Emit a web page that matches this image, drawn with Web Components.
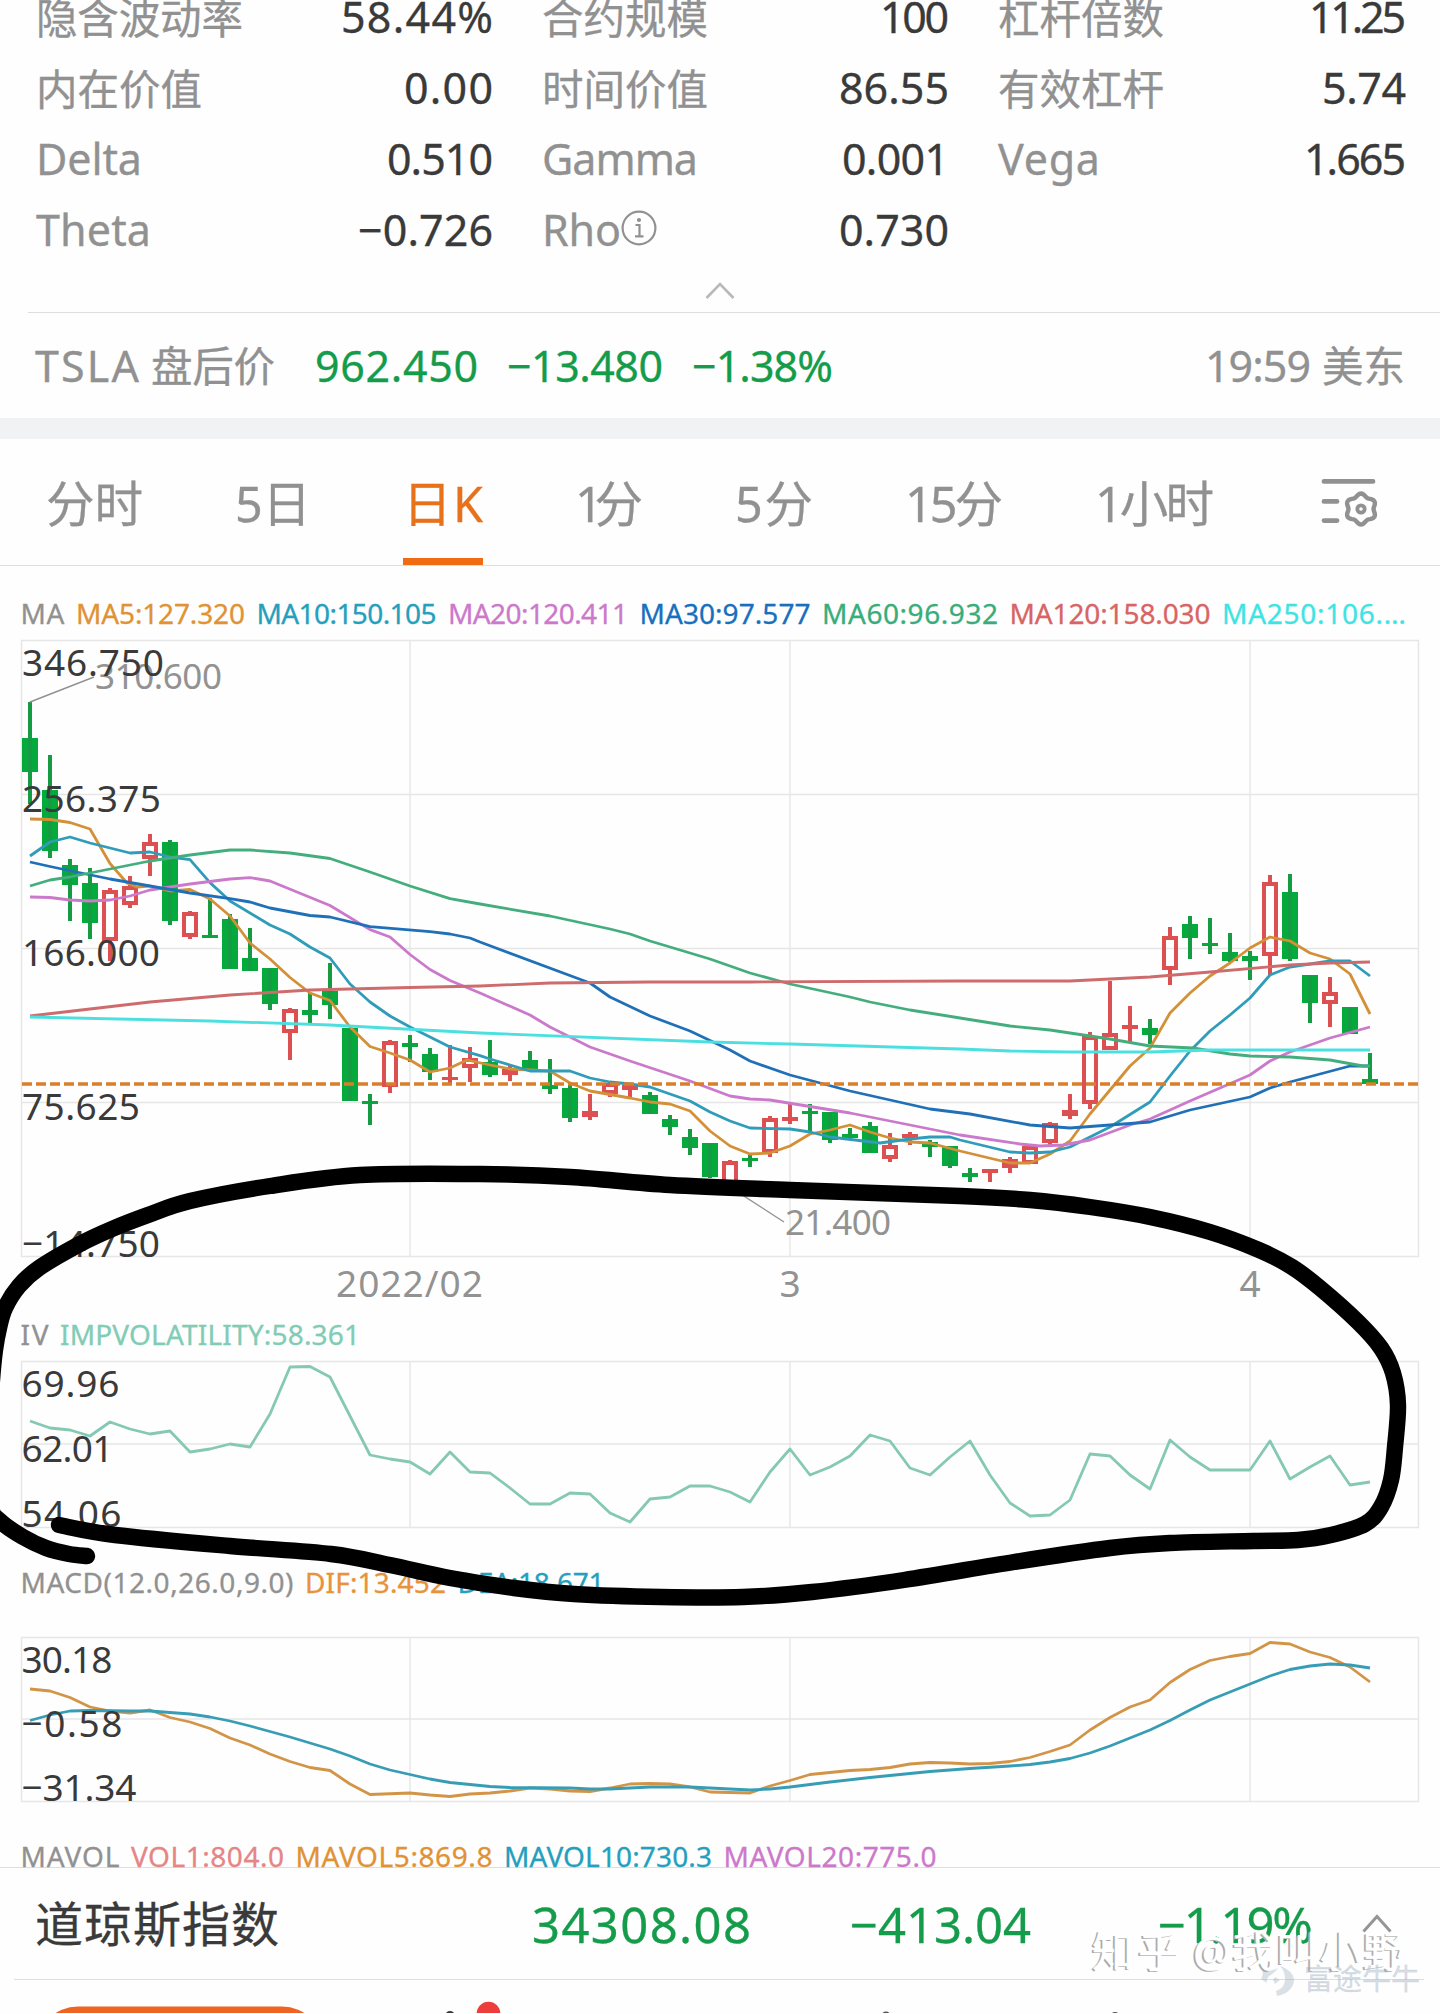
<!DOCTYPE html>
<html lang="zh-CN">
<head>
<meta charset="utf-8">
<title>TSLA</title>
<style>
  body {
    margin: 0;
    width: 1440px;
    height: 2014px;
    overflow: hidden;
    position: relative;
    background: #fefefe;
    color: #3a3a3a;
    font-family: "Noto Sans", "Noto Sans CJK SC", sans-serif;
  }
</style>
</head>
<body>
<option-stats></option-stats>
<after-hours></after-hours>
<period-tabs></period-tabs>

<chart-legend style="height:74px;padding-top:11px" items='[["MA",44,"#919191"],["MA5:127.320",169,"#e09235"],["MA10:150.105",180,"#249fbd"],["MA20:120.411",180,"#cc78cb"],["MA30:97.577",171,"#1670bd"],["MA60:96.932",176,"#38ad7b"],["MA120:158.030",201,"#d86464"],["MA250:106.…",184,"#3ee4e4"]]'></chart-legend>
<price-chart></price-chart>
<chart-legend style="height:104px;padding-top:45px" items='[["IV",28,"#919191"],["IMPVOLATILITY:58.361",300,"#81ccb5"]]'></chart-legend>
<line-chart id="iv" height="166" labels='[["69.96",35.5,98],["62.01",100.5,92],["54.06",165.5,100]]'></line-chart>
<chart-legend style="height:110px;padding-top:23px" items='[["MACD(12.0,26.0,9.0)",273,"#919191"],["DIF:13.452",141,"#e8923a"],["DEA:18.671",147,"#249fbd"]]'></chart-legend>
<line-chart id="macd" height="164" labels='[["30.18",35,91],["−0.58",99,101],["−31.34",163,115]]'></line-chart>
<chart-legend style="height:66px;padding-top:23px" items='[["MAVOL",99,"#919191"],["VOL1:804.0",153,"#e58585"],["MAVOL5:869.8",197,"#e09235"],["MAVOL10:730.3",208,"#249fbd"],["MAVOL20:775.0",213,"#cc78cb"]]'></chart-legend>
<index-bar></index-bar>
<action-bar></action-bar>
<pen-stroke></pen-stroke>
<water-mark></water-mark>

<script>
const GREY = '#919191';
const GREEN = '#149c4b';

// text squeezed or tracked out to an exact width
class FitText extends HTMLElement {
  constructor() {
    super();
    this.attachShadow({ mode: 'open' });
    this.shadowRoot.innerHTML = `
    <style>
      :host { display: inline-block; white-space: nowrap; }
      span { display: inline-block; -webkit-text-stroke: .3px currentColor; }
    </style>
    <span><slot></slot></span>`;
  }

  connectedCallback() {
    const span = this.shadowRoot.querySelector('span');
    const want = Number(this.getAttribute('width'));
    const count = [...this.textContent].length;
    const gap = (want - span.getBoundingClientRect().width) / (count - 1);
    this.style.width = want + 'px';
    span.style.letterSpacing = gap + 'px';
  }
}
customElements.define('fit-text', FitText);

class OptionStats extends HTMLElement {
  constructor() {
    super();
    this.attachShadow({ mode: 'open' });
    const cells = [
      ['隐含波动率', 207, '58.44%', 152], ['合约规模', 166, '100', 69], ['杠杆倍数', 166, '11.25', 97],
      ['内在价值', 166, '0.00', 89], ['时间价值', 166, '86.55', 110], ['有效杠杆', 166, '5.74', 84],
      ['Delta', 106, '0.510', 106], ['Gamma', 156, '0.001', 107], ['Vega', 102, '1.665', 102],
      ['Theta', 115, '−0.726', 135], ['Rho', 79, '0.730', 110],
    ];
    const info = `<svg width="36" height="36" viewBox="0 0 36 36" fill="none" stroke="${GREY}" stroke-width="2.2">
      <circle cx="18" cy="18" r="16.4"/><circle cx="18" cy="10" r="1" fill="${GREY}"/><path d="M14.5 15H18.5V26M14 26.4H22.5"/></svg>`;
    this.shadowRoot.innerHTML = `
    <style>
      :host { display: block; height: 312px; overflow: hidden; }
      .grid {
        display: grid;
        grid-template-columns: 457px 407px 408px;
        grid-auto-rows: 71px;
        column-gap: 49px;
        margin-top: -19px;
        padding-left: 36px;
        font-size: 43px;
        line-height: 71px;
      }
      .cell { display: flex; justify-content: space-between; }
      .label { display: flex; align-items: center; color: ${GREY}; }
      .label svg { margin-bottom: 3px; }
      .cjk { font-size: 41.5px; padding-top: 2px; height: 71px; }
      .fold { display: block; margin: 17px auto 0; }
    </style>
    <div class="grid">${cells.map(([label, lw, value, vw]) => `
      <div class="cell">
        <div class="label ${/[a-z]/.test(label) ? '' : 'cjk'}"><fit-text width="${lw}">${label}</fit-text>${label === 'Rho' ? info : ''}</div>
        <fit-text width="${vw}">${value}</fit-text>
      </div>`).join('')}
    </div>
    <svg class="fold" width="30" height="18" fill="none" stroke="#b8b8b8" stroke-width="2.6"><path d="M1.5 16L15 2.2L28.5 16"/></svg>`;
  }
}
customElements.define('option-stats', OptionStats);

class AfterHours extends HTMLElement {
  constructor() {
    super();
    this.attachShadow({ mode: 'open' });
    this.shadowRoot.innerHTML = `
    <style>
      :host {
        display: flex;
        align-items: center;
        box-sizing: border-box;
        height: 127px;
        padding: 2px 35px 0 0;
        font-size: 43px;
        line-height: 60px;
        color: ${GREY};
        border-bottom: 21px solid #f0f2f4;
        background: linear-gradient(#dedede, #dedede) 28px 0 / 1412px 1px no-repeat;
      }
      .name { margin: 0 40px 0 35px; display: flex; align-items: center; gap: 12px; }
      .cjk { font-size: 41.5px; }
      .green { display: flex; gap: 29px; color: ${GREEN}; }
      .time { margin-left: auto; display: flex; align-items: center; gap: 11px; }
    </style>
    <div class="name"><fit-text width="104">TSLA</fit-text><fit-text class="cjk" width="124">盘后价</fit-text></div>
    <div class="green">
      <fit-text width="163">962.450</fit-text>
      <fit-text width="156">−13.480</fit-text>
      <fit-text width="141">−1.38%</fit-text>
    </div>
    <div class="time"><fit-text width="106">19:59</fit-text><fit-text class="cjk" width="83">美东</fit-text></div>`;
  }
}
customElements.define('after-hours', AfterHours);

class PeriodTabs extends HTMLElement {
  constructor() {
    super();
    this.attachShadow({ mode: 'open' });
    const tabs = [['分时', 97], ['5日', 76], ['日K', 80], ['1分', 68], ['5分', 78], ['15分', 98], ['1小时', 119]];
    // six lobed gear outline
    const gear = [];
    for (let a = 0; a <= 360; a += 6) {
      const r = 14 + 1.5 * Math.cos((a * 6 * Math.PI) / 180);
      const t = ((a - 90) * Math.PI) / 180;
      gear.push(`${(41 + r * Math.cos(t)).toFixed(1)},${(32 + r * Math.sin(t)).toFixed(1)}`);
    }
    this.shadowRoot.innerHTML = `
    <style>
      :host {
        display: flex;
        gap: 92px;
        box-sizing: border-box;
        height: 127px;
        padding: 0 60px 0 46px;
        border-bottom: 1px solid #dedede;
        font-size: 48.5px;
        line-height: 128px;
        color: ${GREY};
      }
      .tab { box-sizing: border-box; height: 126px; }
      .on { color: #e8711c; border-bottom: 7px solid #f06c14; }
      svg { margin: 38px 0 0 auto; }
    </style>
    ${tabs.map(([name, w]) => `<div class="tab ${name === '日K' ? 'on' : ''}"><fit-text width="${w}">${name}</fit-text></div>`).join('')}
    <svg width="60" height="52" fill="none" stroke="${GREY}" stroke-width="4.8" stroke-linecap="round">
      <path d="M4 4.4H53M4 24.4H17M4 43.6H17"/>
      <polygon points="${gear.join(' ')}" stroke-width="4.4"/>
      <circle cx="41" cy="32" r="3.7" stroke-width="3.8"/>
    </svg>`;
  }
}
customElements.define('period-tabs', PeriodTabs);

class ChartLegend extends HTMLElement {
  constructor() {
    super();
    this.attachShadow({ mode: 'open' });
  }

  connectedCallback() {
    const items = JSON.parse(this.getAttribute('items'));
    this.shadowRoot.innerHTML = `
    <style>
      :host {
        display: flex;
        align-items: flex-start;
        gap: 11.5px;
        box-sizing: border-box;
        padding-left: 20.5px;
        font-size: 28px;
        line-height: 1;
      }
      fit-text { line-height: 72px; }
      :host([items*="IV"]) fit-text, :host([items*="MACD"]) fit-text, :host([items*="VOL"]) fit-text { line-height: 64px; }
    </style>
    ${items.map(([text, w, color]) => `<fit-text width="${w}" style="color:${color}">${text}</fit-text>`).join('')}`;
  }
}
customElements.define('chart-legend', ChartLegend);

const MONTHS = [410, 790, 1250];
const chartStyle = `
  :host { display: block; }
  svg { display: block; }
  text { font-size: 37px; fill: #3a3a3a; }
  .grid { stroke: #e6e6e6; stroke-width: 1.4; fill: none; }
  .line { fill: none; stroke-width: 2.8; stroke-linejoin: round; }
`;

// p is "x,y x,y"; one colour per series
const line = (color, p) => `<polyline class="line" stroke="${color}" points="${p}"/>`;

const grid = (top, bottom, rows) => `<path class="grid" d="M21.5 ${top}H1418.5V${bottom}H21.5Z${rows.map((y) => `M21.5 ${y}H1418.5`).join('')}${MONTHS.map((x) => `M${x} ${top}V${bottom}`).join('')}"/>`;

class PriceChart extends HTMLElement {
  constructor() {
    super();
    this.attachShadow({ mode: 'open' });
    // colour, high, body top, body bottom, low
    const candles = `g702,738,772,804 g755,790,851,858 g859,865,885,921 g868,883,923,939 r888,890,941,961
      r876,886,905,908 r834,842,859,876 g840,842,921,925 r911,912,937,939 g898,935,938,938
      g914,919,969,969 g928,958,971,971 g968,968,1004,1010 r1008,1009,1033,1060 g993,1010,1015,1023
      g963,991,1005,1019 g1028,1028,1101,1101 g1094,1101,1104,1125 r1040,1041,1087,1093 g1035,1043,1047,1062
      g1048,1054,1072,1080 r1045,1077,1080,1083 r1047,1058,1068,1082 g1040,1062,1075,1077 r1066,1069,1075,1081
      g1051,1060,1069,1069 g1059,1085,1089,1094 g1084,1088,1118,1122 r1094,1111,1117,1120 r1083,1083,1094,1097
      r1083,1085,1090,1097 g1092,1095,1114,1114 g1115,1119,1127,1135 g1129,1137,1148,1155 g1143,1143,1177,1178
      r1160,1161,1184,1187 g1155,1158,1161,1167 r1116,1118,1153,1157 r1104,1117,1121,1124 g1104,1111,1114,1133
      g1112,1112,1140,1143 g1128,1134,1138,1140 g1122,1126,1153,1153 r1133,1145,1159,1162 r1132,1134,1138,1145
      g1140,1142,1147,1157 g1146,1146,1166,1168 g1168,1173,1177,1182 r1169,1169,1173,1182 r1157,1159,1168,1173
      r1144,1146,1164,1164 r1122,1123,1143,1145 r1094,1110,1116,1119 r1032,1036,1104,1109 r981,1033,1050,1050
      r1006,1025,1029,1043 g1019,1028,1035,1044 r927,936,970,985 g916,924,938,959 g918,943,946,954
      g933,952,961,962 g951,956,961,980 r875,882,956,975 g874,892,959,961 g975,975,1003,1023
      r977,992,1004,1027 g1007,1007,1034,1034 g1053,1079,1084,1084`.split(/\s+/);

    const bars = candles.map((c, i) => {
      const x = 30 + i * 20;
      const [high, top, bottom, low] = c.slice(1).split(',').map(Number);
      if (c[0] === 'g') {
        return `<path fill="#05aa3c" d="M${x - 8} ${top}h16V${bottom}h-16Z"/><path fill="#159c43" d="M${x - 2} ${high}h4V${low}h-4Z"/>`;
      }
      const hollow = bottom - top > 9 ? `M${x - 4} ${top + 4}V${bottom - 4}h8V${top + 4}Z` : '';
      return `<path fill="#dc5052" d="M${x - 8} ${top}h16V${bottom}h-16Z${hollow}M${x - 2} ${high}h4V${top}h-4ZM${x - 2} ${bottom}h4V${low}h-4Z"/>`;
    }).join('');

    const scale = [['346.750', 676, 142], ['256.375', 812, 139], ['166.000', 966, 138], ['75.625', 1120, 118], ['−14.750', 1257, 138]];

    this.shadowRoot.innerHTML = `
    <style>${chartStyle}
      .note { font-size: 35px; fill: #929292; }
      .date { fill: #929292; }
    </style>
    <svg width="1440" height="617" viewBox="0 640 1440 617" overflow="visible">
      ${grid(640.5, 1256.5, [794.5, 948.5, 1102.5])}
      ${bars}
      ${line('#d39037', '30,819 50,819.5 70,822.5 90,829 110,863.5 127,883 137,887 150,886 170,891 190,889.5 210,899 230,916 250,943 270,959 290,977.5 310,993 330,1000.5 350,1027 370,1046.5 390,1053 410,1060 430,1072 450,1068 467,1060 490,1065 510,1069 550,1071 570,1083 590,1091 630,1098 650,1102 670,1104 690,1111 710,1131 730,1146 750,1154 770,1153 790,1146 810,1134 830,1130 850,1125 870,1132 890,1138 910,1142 930,1143 960,1151 1010,1163 1030,1163 1050,1154 1070,1141 1090,1114 1110,1090 1130,1066 1150,1048 1170,1013 1190,993 1210,976 1230,963 1250,948 1270,937 1290,941 1310,953 1330,959 1350,974 1370,1014')}
      ${line('#2f9cb9', '30,856 50,842 70,837 90,843 130,853 150,852 170,857 190,859.6 210,882.6 230,901 270,925 290,934 310,947 330,958 350,984 370,1002 390,1016 410,1027 430,1037 450,1047 480,1055.6 490,1059 530,1071 570,1071 590,1078 610,1082 630,1084 650,1087 690,1101 710,1112 730,1121 750,1128 790,1129 810,1132 830,1137 880,1143 910,1139 930,1137 950,1137 960,1140 1010,1152 1030,1153 1050,1152 1070,1147 1110,1127 1150,1102 1170,1076 1190,1051 1210,1031 1230,1015 1250,998 1270,975 1290,967 1330,961 1350,961 1370,976')}
      ${line('#cb79ca', '30,897 50,897.5 70,900 90,901 110,900 130,896 150,890 190,884 230,879 250,877.6 270,881 330,905.5 370,929.6 390,937 410,954.5 430,969.5 450,980.5 480,993 530,1015 550,1027 590,1047 610,1054 630,1061 690,1081 730,1096 750,1099 770,1100 850,1113 910,1125 960,1135 1020,1144 1040,1146 1063,1145 1090,1140 1130,1125 1150,1119 1190,1101 1250,1075 1270,1061 1290,1052 1330,1038 1370,1027')}
      ${line('#2070b8', '30,862 50,866.5 110,879 150,886 190,893 230,898.6 250,902 270,908 310,915.5 330,917 370,926.6 430,931.6 450,934 470,938 480,942 590,983 610,997 650,1016 690,1031 730,1050 750,1061 790,1075 850,1091 930,1109 970,1114 1030,1125 1070,1128 1110,1125 1150,1122 1190,1110 1250,1097 1270,1088 1290,1082 1350,1066 1370,1066')}
      ${line('#44ad7e', '30,886 50,880 70,877 110,869 150,861 190,855 230,850 250,850 290,853 330,858.5 370,872 410,886 450,898.6 480,904 550,916 610,929 630,934 650,941 710,959 750,973 790,984 850,997 870,1002 910,1010 960,1018 1010,1026 1050,1030 1110,1039 1150,1046 1193,1048 1230,1054 1250,1056 1290,1057 1330,1060 1363,1066 1370,1066')}
      ${line('#ce6b6c', '30,1016 150,1002 230,995 310,990 410,987.5 480,986 550,983 650,982 750,982 960,981 1070,981 1150,977 1210,972 1290,965 1330,963 1370,962')}
      ${line('#4be0df', '30,1017 210,1021 330,1025 480,1033 710,1042 790,1044 960,1049 1010,1051 1070,1052 1150,1052 1210,1050 1370,1050')}
      <path d="M22 1084H1418.5" stroke="#d97e2b" stroke-width="3.6" stroke-dasharray="10 4"/>
      <path d="M30 702L94 677M730 1182V1187L784 1222" stroke="#929292" stroke-width="1.4" fill="none"/>
      <text class="note" x="95" y="688.5" textLength="127">310.600</text>
      <text class="note" x="785" y="1235" textLength="106">21.400</text>
      ${scale.map(([t, y, w]) => `<text x="22" y="${y}" textLength="${w}">${t}</text>`).join('')}
      <text class="date" x="336" y="1297" textLength="147">2022/02</text>
      <text class="date" x="790" y="1297" text-anchor="middle">3</text>
      <text class="date" x="1250" y="1297" text-anchor="middle">4</text>
    </svg>`;
  }
}
customElements.define('price-chart', PriceChart);

const every20 = (ys) => ys.map((y, i) => `${30 + i * 20},${y}`).join(' ');

const series = {
  iv: [1361.5, 1444, [
    ['#85c8b4', every20([1421, 1428, 1430, 1436, 1422, 1429, 1434, 1431, 1452, 1449, 1444, 1447, 1414, 1367, 1366.5, 1377, 1416, 1455, 1459, 1462, 1474, 1452, 1472, 1473, 1488, 1504, 1504, 1493, 1494, 1513, 1522, 1499, 1497, 1486, 1486, 1492, 1502, 1472, 1449, 1475, 1467, 1456, 1435, 1441, 1468, 1475, 1457, 1441, 1475, 1503, 1516, 1515, 1500, 1454, 1456, 1475, 1489, 1440, 1457, 1470, 1470, 1470, 1441, 1479, 1467, 1456, 1485, 1482])],
  ]],
  macd: [1637.5, 1719, [
    ['#d29447', '30,1689 50,1691 70,1697.5 90,1707 110,1711 130,1713 150,1710 170,1717.5 190,1722 210,1728.5 230,1738 250,1745 270,1754 290,1761.5 310,1767.5 330,1770.5 350,1784 370,1794.5 410,1793 430,1795 450,1796.5 470,1794 490,1793 510,1791 530,1788 550,1789 570,1791 590,1791.5 610,1788 630,1784 650,1783.5 670,1784 690,1787 710,1792 730,1792.5 750,1793 770,1786 790,1780.5 810,1774.5 850,1770.5 870,1769.5 890,1767.5 910,1764 930,1762.5 950,1763 970,1764 990,1763.5 1010,1761.5 1030,1757.5 1050,1751.5 1070,1745 1090,1730 1110,1717.5 1130,1707 1150,1700 1170,1682.5 1190,1669.5 1210,1660.5 1230,1656.5 1250,1653.5 1270,1642.5 1290,1644 1310,1652 1330,1657.5 1350,1667 1370,1682'],
    ['#369db5', '30,1720.5 50,1715 70,1711 90,1710.5 130,1711 150,1711 190,1714 210,1717 230,1721 250,1726 270,1731.5 290,1737 310,1743 330,1749 350,1756 370,1764 390,1770 410,1774.5 430,1779 450,1782.5 490,1786.5 510,1787.5 570,1788 590,1789 610,1789 650,1787 690,1787 710,1788 750,1790 770,1789 790,1787 830,1782 870,1777.5 930,1771.5 970,1768.5 1010,1766 1030,1764.5 1050,1762 1070,1758.5 1090,1753 1110,1746 1150,1730 1170,1720.5 1190,1710 1210,1700 1230,1692 1250,1684 1270,1676 1290,1669.5 1310,1666 1330,1664 1350,1665 1370,1668'],
  ]],
};

class LineChart extends HTMLElement {
  constructor() {
    super();
    this.attachShadow({ mode: 'open' });
  }

  connectedCallback() {
    const [top, middle, lines] = series[this.id];
    const height = Number(this.getAttribute('height'));
    const labels = JSON.parse(this.getAttribute('labels'));
    this.shadowRoot.innerHTML = `
    <style>${chartStyle}</style>
    <svg width="1440" height="${height}" viewBox="0 ${top - 0.5} 1440 ${height}" overflow="visible">
      ${grid(top, top + height, [middle])}
      ${lines.map(([color, p]) => line(color, p)).join('')}
      ${labels.map(([t, y, w]) => `<text x="21.5" y="${top + y}" textLength="${w}">${t}</text>`).join('')}
    </svg>`;
  }
}
customElements.define('line-chart', LineChart);

class IndexBar extends HTMLElement {
  constructor() {
    super();
    this.attachShadow({ mode: 'open' });
    this.shadowRoot.innerHTML = `
    <style>
      :host {
        display: flex;
        align-items: center;
        box-sizing: border-box;
        height: 113px;
        padding: 0 48px 0 35px;
        border-top: 1px solid #dedede;
        background: linear-gradient(#dedede, #dedede) 14px 100% / 1410px 1px no-repeat;
        font-size: 49px;
        line-height: 70px;
        color: ${GREEN};
      }
      .name { width: 497px; color: #3a3a3a; font-size: 48px; }
      .price { width: 318px; }
      .diff { width: 308px; }
      svg { margin-left: auto; }
    </style>
    <div class="name"><fit-text width="244">道琼斯指数</fit-text></div>
    <div class="price"><fit-text width="219">34308.08</fit-text></div>
    <div class="diff"><fit-text width="181">−413.04</fit-text></div>
    <fit-text width="155">−1.19%</fit-text>
    <svg width="30" height="20" fill="none" stroke="#959595" stroke-width="3"><path d="M1.5 17.5L15 2.5L28.5 17.5"/></svg>`;
  }
}
customElements.define('index-bar', IndexBar);

class ActionBar extends HTMLElement {
  constructor() {
    super();
    this.attachShadow({ mode: 'open' });
    this.shadowRoot.innerHTML = `
    <style>
      :host { display: block; height: 33px; overflow: hidden; }
      svg { display: block; }
    </style>
    <svg width="1440" height="33" viewBox="0 1981 1440 33">
      <rect x="36" y="2007.5" width="288" height="84" rx="42" fill="#ee6420"/>
      <circle cx="450" cy="2017" r="5" fill="#3a3a3a"/>
      <circle cx="488.5" cy="2014.5" r="11.8" fill="#ee3d3d"/>
      <circle cx="886" cy="2017" r="4.5" fill="#555"/>
      <circle cx="1115" cy="2017" r="4" fill="#555"/>
    </svg>`;
  }
}
customElements.define('action-bar', ActionBar);

// freehand loop laid over the charts
class PenStroke extends HTMLElement {
  constructor() {
    super();
    this.attachShadow({ mode: 'open' });
    const p = [[87, 1556], [69, 1554], [46, 1548], [23, 1537], [0, 1521], [-9, 1506], [-13, 1450], [-8, 1380], [-5, 1350],
      [-1, 1328], [5, 1308], [19, 1286], [39, 1268], [80, 1244], [112, 1229], [148, 1215], [190, 1201], [270, 1186], [360, 1175], [480, 1174],
      [570, 1177], [670, 1185], [790, 1190], [960, 1196], [1030, 1200], [1090, 1207], [1150, 1217], [1210, 1232], [1259, 1250],
      [1292, 1267], [1320, 1288], [1358, 1322], [1381, 1348], [1393, 1373], [1398, 1405], [1395, 1447], [1391, 1480], [1381, 1507],
      [1365, 1524], [1331, 1535], [1298, 1540], [1253, 1541], [1170, 1543], [1110, 1548], [1014, 1562], [904, 1580], [812, 1592],
      [743, 1597], [661, 1597], [574, 1594], [514, 1588], [450, 1578], [390, 1565], [331, 1554], [230, 1546], [115, 1535], [59, 1525]];
    // Catmull-Rom to bezier
    let d = `M${p[0]}`;
    for (let i = 0; i < p.length - 1; i++) {
      const a = p[i - 1] || p[i];
      const b = p[i];
      const c = p[i + 1];
      const e = p[i + 2] || c;
      d += `C${b[0] + (c[0] - a[0]) / 6},${b[1] + (c[1] - a[1]) / 6} ${c[0] - (e[0] - b[0]) / 6},${c[1] - (e[1] - b[1]) / 6} ${c}`;
    }
    this.shadowRoot.innerHTML = `
    <style>
      :host { position: absolute; inset: 0; pointer-events: none; }
    </style>
    <svg width="1440" height="2014"><path d="${d}" fill="none" stroke="#000" stroke-width="16.4" stroke-linecap="round"/></svg>`;
  }
}
customElements.define('pen-stroke', PenStroke);

class WaterMark extends HTMLElement {
  constructor() {
    super();
    this.attachShadow({ mode: 'open' });
    this.shadowRoot.innerHTML = `
    <style>
      :host { position: absolute; right: 20px; bottom: 17px; width: 328px; }
      .author {
        font-size: 42px;
        line-height: 50px;
        color: #fff;
        text-shadow: -2px 1px 0 #aaa;
        display: flex;
        gap: 13px;
      }
      .brand {
        display: flex;
        justify-content: flex-end;
        align-items: center;
        gap: 8px;
        margin-top: -15px;
        font-size: 29px;
        line-height: 36px;
        color: rgba(150, 168, 185, .4);
      }
    </style>
    <div class="author"><fit-text width="88">知乎</fit-text><fit-text width="212">@我叫小野</fit-text></div>
    <div class="brand">
      <svg width="36" height="36" fill="rgba(150,168,185,.35)"><path d="M2 8Q9 12 18 7Q15 12 9 15Q6 18 7 22L1 18Q4 13 2 8ZM20 5Q34 10 34 20Q32 32 17 35L16 30Q25 27 25 18Q25 10 20 5ZM15 16L20 19L15 23L13 19Z"/></svg>
      <fit-text width="116">富途牛牛</fit-text>
    </div>`;
  }
}
customElements.define('water-mark', WaterMark);
</script>
</body>
</html>
